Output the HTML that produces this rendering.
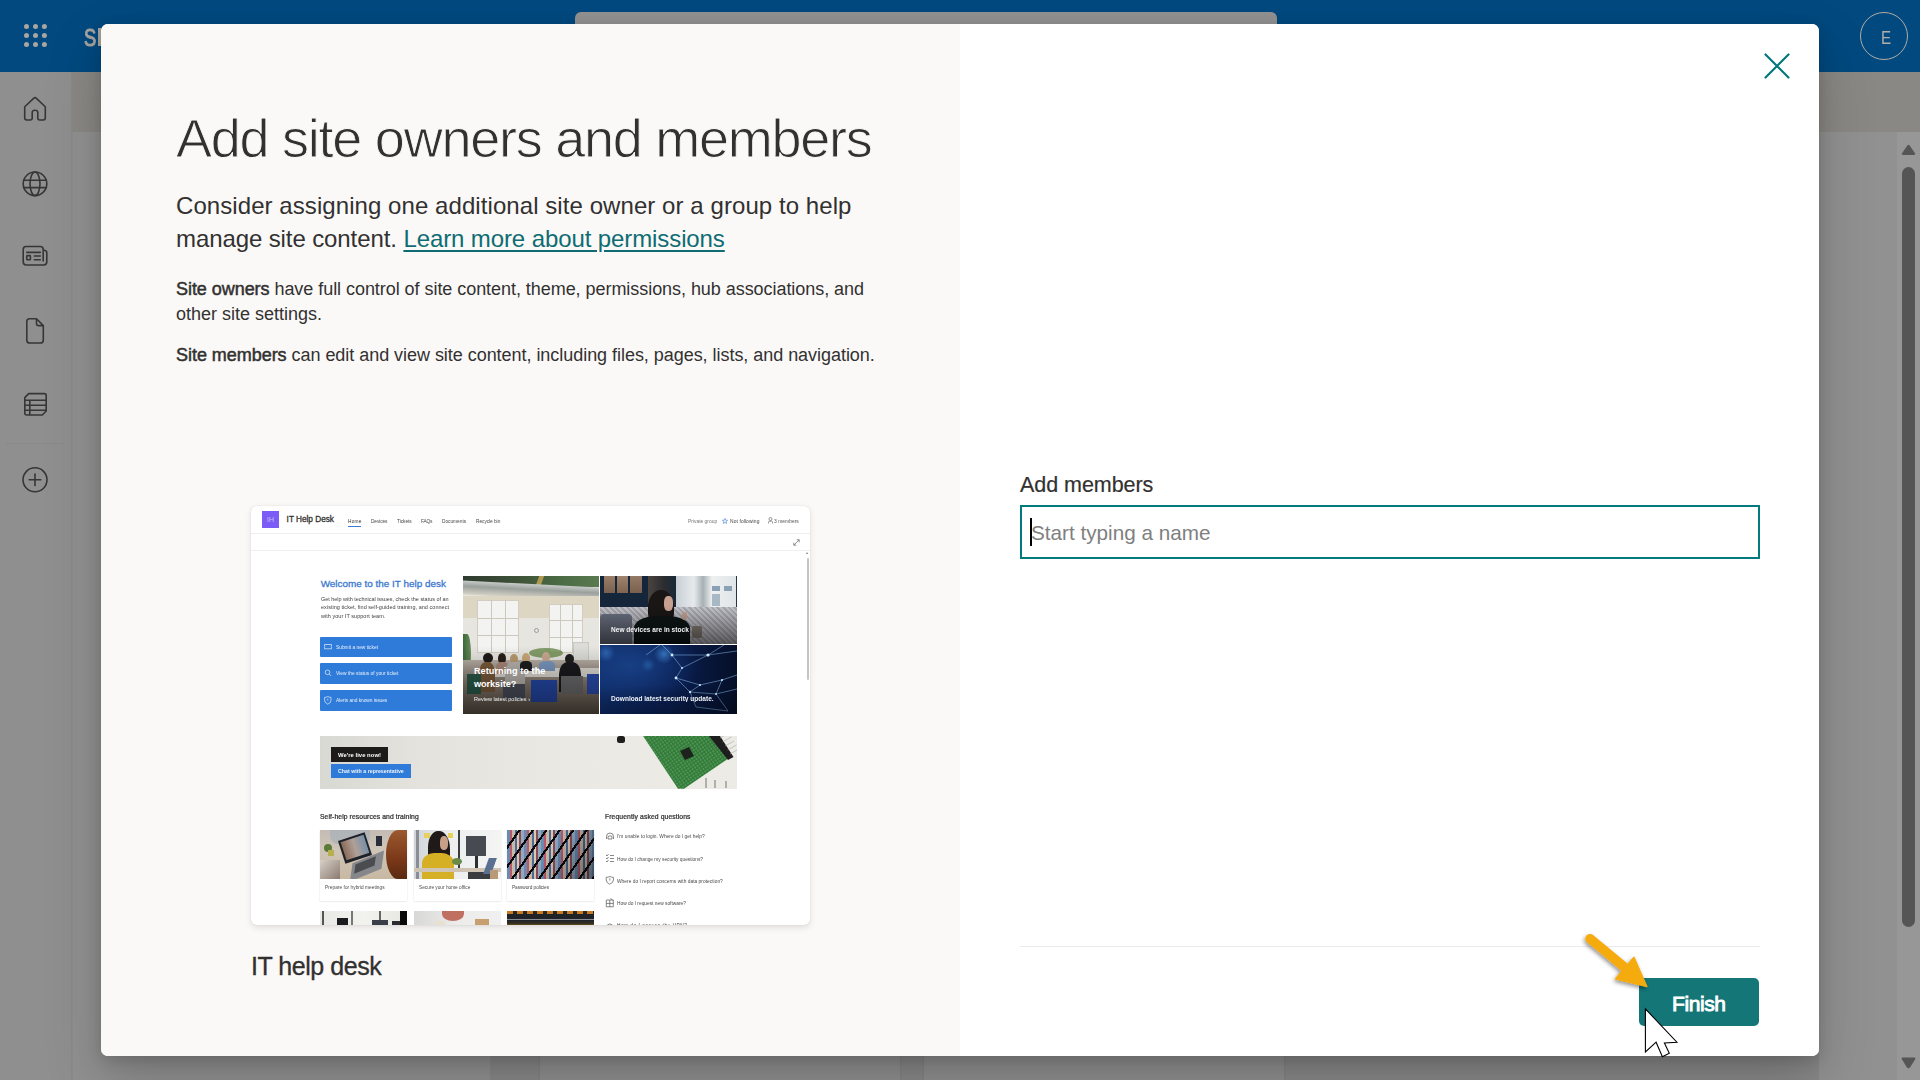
<!DOCTYPE html>
<html><head><meta charset="utf-8">
<style>
*{margin:0;padding:0;box-sizing:border-box}
html,body{width:1920px;height:1080px;overflow:hidden;font-family:"Liberation Sans",sans-serif;background:#8c8c8c;position:relative}
.abs{position:absolute}
#topbar{left:0;top:0;width:1920px;height:72px;background:#01497f}
#rail{left:0;top:72px;width:72px;height:1008px;background:#8f8f8f;border-right:1px solid #8a8a8a}
#hdr{left:72px;top:72px;width:1848px;height:60px;background:#8a8885}
#page{left:73px;top:132px;width:1847px;height:948px;background:#919191}
#sbar{left:1897px;top:132px;width:23px;height:948px;background:#979797}
#modal{left:101px;top:24px;width:1718px;height:1032px;border-radius:7px;overflow:hidden;background:#fff;box-shadow:0 25.6px 57.6px 0 rgba(0,0,0,.19),0 4.8px 14.4px 0 rgba(0,0,0,.15)}
#lp{left:0;top:0;width:859px;height:1032px;background:#faf9f8}
#rp{left:859px;top:0;width:859px;height:1032px;background:#fff}
.t{position:absolute;white-space:nowrap}
.sb{-webkit-text-stroke:0.5px currentColor}
.a{position:absolute}
.txt{color:#323130;white-space:nowrap}
</style></head><body>
<div id="topbar" class="abs">
  <svg class="abs" style="left:0;top:0" width="100" height="72" viewBox="0 0 100 72" fill="#aaa59f">
    <circle cx="26.5" cy="26.4" r="2.5"/><circle cx="35.5" cy="26.4" r="2.5"/><circle cx="44.4" cy="26.4" r="2.5"/>
    <circle cx="26.5" cy="35.4" r="2.5"/><circle cx="35.5" cy="35.4" r="2.5"/><circle cx="44.4" cy="35.4" r="2.5"/>
    <circle cx="26.5" cy="44.4" r="2.5"/><circle cx="35.5" cy="44.4" r="2.5"/><circle cx="44.4" cy="44.4" r="2.5"/>
  </svg>
  <div class="t" style="left:84.3px;top:26.8px;font-size:23.5px;line-height:23.5px;color:#a9a49e;-webkit-text-stroke:1px #a9a49e;transform:scaleX(0.78);transform-origin:0 0">S</div>
  <div class="abs" style="left:98px;top:27.5px;width:2.6px;height:18.5px;background:#a9a49e"></div>
  <div class="abs" style="left:575px;top:12px;width:702px;height:40px;border-radius:6px;background:#929292"></div>
  <div class="abs" style="left:1860px;top:12px;width:48px;height:48px;border-radius:50%;border:1.2px solid #b0aca6"></div>
  <div class="t" style="left:1880.5px;top:28px;font-size:19px;line-height:19px;color:#b3aea8;transform:scaleX(0.8);transform-origin:0 0">E</div>
</div>
<div id="rail" class="abs"></div>
<svg class="abs" style="left:0;top:72px" width="72" height="440" viewBox="0 72 72 440" fill="none" stroke="#363636" stroke-width="1.6" stroke-linejoin="round" stroke-linecap="round">
  <!-- home -->
  <path d="M25 106.5 L33.6 98.3 Q35 97 36.4 98.3 L45 106.5 Q45.3 106.9 45.3 107.5 L45.3 117.8 Q45.3 120 43.3 120 L39.8 120 Q37.8 120 37.8 118 L37.8 112.5 Q37.8 110.3 35 110.3 Q32.2 110.3 32.2 112.5 L32.2 118 Q32.2 120 30.2 120 L26.7 120 Q24.7 120 24.7 117.8 L24.7 107.5 Q24.7 106.9 25 106.5 Z"/>
  <!-- globe -->
  <circle cx="35" cy="183.8" r="11.8"/>
  <ellipse cx="35" cy="183.8" rx="5" ry="11.8"/>
  <path d="M23.6 180.2 H46.4 M23.6 187.6 H46.4"/>
  <!-- news -->
  <path d="M26 246.5 H40.3 Q43.2 246.5 43.2 249.4 V250.2 H44 Q46.8 250.2 46.8 253 V261.8 Q46.8 265 43.6 265 H26.4 Q23.2 265 23.2 261.8 V249.7 Q23.2 246.5 26 246.5 Z M43.2 250.2 V261"/>
  <path d="M26.8 252.4 H40.3 M34.3 256 H40.3 M34.3 259.8 H40.3"/>
  <rect x="26.8" y="255.6" width="3.6" height="4.2" rx="0.6"/>
  <!-- file -->
  <path d="M29.4 318.7 H36.5 L43.3 325.6 V339.9 Q43.3 343 40.2 343 H29.9 Q26.8 343 26.8 339.9 V321.5 Q26.8 318.7 29.4 318.7 Z M36.5 318.7 V324 Q36.5 325.6 38.1 325.6 H43.3"/>
  <!-- list -->
  <path d="M28.7 393.6 H44.2 Q46.2 393.6 46.2 395.6 V411 L42.3 415 H26.8 Q24.8 415 24.8 413 V397.6 Z M24.8 400.3 H46.2 M24.8 405.3 H46.2 M24.8 410.2 H46.2 M29.8 400.3 V415"/>
  <!-- plus circle -->
  <circle cx="35" cy="479.8" r="12"/>
  <path d="M35 474 V485.6 M29.2 479.8 H40.8"/>
</svg>
<div class="abs" style="left:6px;top:442.5px;width:58px;height:1px;background:#888888"></div>
<div id="hdr" class="abs"></div>
<div id="page" class="abs"></div>
<div id="sbar" class="abs"></div>
<div class="abs" style="left:490px;top:1050px;width:1329px;height:30px;background:#888888"></div>
<div class="abs" style="left:540px;top:1040px;width:360px;height:60px;border-radius:4px;background:#8f8f8f;box-shadow:0 0 1.5px rgba(0,0,0,0.2)"></div>
<div class="abs" style="left:924px;top:1040px;width:360px;height:60px;border-radius:4px;background:#8f8f8f;box-shadow:0 0 1.5px rgba(0,0,0,0.2)"></div>
<svg class="abs" style="left:1896px;top:140px" width="24" height="940" viewBox="0 140 24 940">
  <path d="M11.5 145.3 Q12.5 144 13.5 145.3 L19 153.3 Q19.6 155 17.8 155 H7.2 Q5.4 155 6 153.3 Z" fill="#555"/>
  <rect x="6" y="167" width="13" height="760" rx="6.5" fill="#555"/>
  <path d="M7.5 1057.5 H18.5 Q20 1057.5 19.3 1059 L14.2 1067.3 Q12.5 1069 10.8 1067.3 L5.7 1059 Q5 1057.5 6.5 1057.5 Z" fill="#555"/>
</svg>

<div id="modal" class="abs">
  <div id="lp" class="abs"></div>
  <div id="rp" class="abs"></div>
</div>

<!-- LEFT TEXT -->
<div class="t" style="left:176px;top:111px;font-size:54px;line-height:54px;letter-spacing:-1.25px;color:#323130;-webkit-text-stroke:0.9px #faf9f8">Add site owners and members</div>
<div class="t" style="left:176px;top:194.3px;font-size:24px;line-height:24px;letter-spacing:0.07px;color:#323130">Consider assigning one additional site owner or a group to help</div>
<div class="t" style="left:176px;top:226.6px;font-size:24px;line-height:24px;letter-spacing:-0.1px;color:#323130">manage site content. <span style="color:#0f6c73;text-decoration:underline;text-underline-offset:3px;text-decoration-thickness:2px">Learn more about permissions</span></div>
<div class="t" style="left:176px;top:280.4px;font-size:18px;line-height:18px;letter-spacing:-0.05px;color:#323130"><span class="sb">Site owners</span> have full control of site content, theme, permissions, hub associations, and</div>
<div class="t" style="left:176px;top:304.8px;font-size:18px;line-height:18px;color:#323130">other site settings.</div>
<div class="t" style="left:176px;top:346px;font-size:18px;line-height:18px;letter-spacing:-0.04px;color:#323130"><span class="sb">Site members</span> can edit and view site content, including files, pages, lists, and navigation.</div>
<div class="t" style="left:251px;top:953.8px;font-size:25px;line-height:25px;letter-spacing:-0.45px;color:#323130;-webkit-text-stroke:0.35px #323130">IT help desk</div>

<!--PREVIEW-->
<div id="pv" class="abs" style="left:251px;top:506px;width:559px;height:419px;border-radius:6px;overflow:hidden;background:#fff;box-shadow:0 0 1.2px rgba(0,0,0,0.14),0 2.5px 6px rgba(0,0,0,0.1)">
<div class="a" style="left:11.00px;top:5.20px;width:17.00px;height:16.50px;background:#7b5cf6"></div>
<div class="t" style="left:15.50px;top:9.87px;font-size:70.000px;line-height:70.000px;letter-spacing:0.000px;font-weight:400;color:#c9bdfb;transform:scale(0.1);transform-origin:0 0;">IH</div>
<div class="t" style="left:35.60px;top:10.33px;font-size:8.227px;line-height:8.227px;letter-spacing:0.000px;font-weight:400;color:#323130;-webkit-text-stroke:0.300px currentColor;">IT Help Desk</div>
<div class="t" style="left:96.80px;top:13.24px;font-size:48.000px;line-height:48.000px;letter-spacing:1.987px;font-weight:400;color:#333;transform:scale(0.1);transform-origin:0 0;">Home</div>
<div class="a" style="left:97.00px;top:19.80px;width:13.20px;height:1.00px;background:#3b7ad6"></div>
<div class="t" style="left:119.70px;top:13.24px;font-size:48.000px;line-height:48.000px;letter-spacing:-0.954px;font-weight:400;color:#4a4948;transform:scale(0.1);transform-origin:0 0;">Devices</div>
<div class="t" style="left:146.00px;top:13.24px;font-size:48.000px;line-height:48.000px;letter-spacing:-0.540px;font-weight:400;color:#4a4948;transform:scale(0.1);transform-origin:0 0;">Tickets</div>
<div class="t" style="left:169.70px;top:13.24px;font-size:48.000px;line-height:48.000px;letter-spacing:-2.010px;font-weight:400;color:#4a4948;transform:scale(0.1);transform-origin:0 0;">FAQs</div>
<div class="t" style="left:190.90px;top:13.24px;font-size:48.000px;line-height:48.000px;letter-spacing:-0.221px;font-weight:400;color:#4a4948;transform:scale(0.1);transform-origin:0 0;">Documents</div>
<div class="t" style="left:224.70px;top:13.24px;font-size:48.000px;line-height:48.000px;letter-spacing:-0.512px;font-weight:400;color:#4a4948;transform:scale(0.1);transform-origin:0 0;">Recycle bin</div>
<div class="t" style="left:436.80px;top:13.11px;font-size:49.500px;line-height:49.500px;letter-spacing:-0.201px;font-weight:400;color:#777;transform:scale(0.1);transform-origin:0 0;">Private group</div>
<svg class="a" style="left:471px;top:11.5px" width="6" height="6" viewBox="0 0 6 6"><path d="M3 0.5 L3.7 2.2 L5.6 2.3 L4.1 3.5 L4.6 5.4 L3 4.4 L1.4 5.4 L1.9 3.5 L0.4 2.3 L2.3 2.2 Z" fill="none" stroke="#3b7ad6" stroke-width="0.6"/></svg>
<div class="t" style="left:478.70px;top:13.11px;font-size:49.500px;line-height:49.500px;letter-spacing:0.884px;font-weight:400;color:#444;transform:scale(0.1);transform-origin:0 0;">Not following</div>
<svg class="a" style="left:516.8px;top:11px" width="5" height="7" viewBox="0 0 5 7"><circle cx="2.5" cy="2" r="1.5" fill="none" stroke="#555" stroke-width="0.6"/><path d="M0.5 6.5 V5.2 Q0.5 4.2 1.5 4.2 H3.5 Q4.5 4.2 4.5 5.2 V6.5" fill="none" stroke="#555" stroke-width="0.6"/></svg>
<div class="t" style="left:523.20px;top:13.11px;font-size:49.500px;line-height:49.500px;letter-spacing:0.053px;font-weight:400;color:#555;transform:scale(0.1);transform-origin:0 0;">3 members</div>
<div class="a" style="left:0.00px;top:27.00px;width:559.00px;height:1.00px;background:#eeeeee"></div>
<svg class="a" style="left:541.5px;top:33px" width="7" height="7" viewBox="0 0 7 7"><path d="M0.8 6.2 L6.2 0.8 M3.6 0.8 H6.2 V3.4 M0.8 3.6 V6.2 H3.4" fill="none" stroke="#666" stroke-width="0.7"/></svg>
<div class="a" style="left:0.00px;top:44.00px;width:559.00px;height:1.00px;background:#f0f0f0"></div>
<div class="a" style="left:555.50px;top:52.00px;width:2.00px;height:122.00px;background:#c4c4c4;border-radius:1px"></div>
<div class="a" style="left:555px;top:46px;width:0;height:0;border-left:1.5px solid transparent;border-right:1.5px solid transparent;border-bottom:2px solid #777"></div>
<div class="t" style="left:69.70px;top:72.50px;font-size:9.916px;line-height:9.916px;letter-spacing:0.000px;font-weight:400;color:#3b78d0;-webkit-text-stroke:0.300px currentColor;">Welcome to the IT help desk</div>
<div class="t" style="left:69.50px;top:89.64px;font-size:55.000px;line-height:55.000px;letter-spacing:-0.286px;font-weight:400;color:#403f3e;transform:scale(0.1);transform-origin:0 0;">Get help with technical issues, check the status of an</div>
<div class="t" style="left:69.50px;top:98.44px;font-size:55.000px;line-height:55.000px;letter-spacing:0.377px;font-weight:400;color:#403f3e;transform:scale(0.1);transform-origin:0 0;">existing ticket, find self-guided training, and connect</div>
<div class="t" style="left:69.50px;top:107.34px;font-size:55.000px;line-height:55.000px;letter-spacing:0.328px;font-weight:400;color:#403f3e;transform:scale(0.1);transform-origin:0 0;">with your IT support team.</div>
<div class="a" style="left:69.00px;top:130.60px;width:132.00px;height:20.50px;background:#2f7bd9;border-radius:1px"></div>
<div class="t" style="left:85.00px;top:138.74px;font-size:48.500px;line-height:48.500px;letter-spacing:-0.029px;font-weight:400;color:#e8f0fb;transform:scale(0.1);transform-origin:0 0;">Submit a new ticket</div>
<div class="a" style="left:69.00px;top:157.00px;width:132.00px;height:20.80px;background:#2f7bd9;border-radius:1px"></div>
<div class="t" style="left:85.00px;top:165.29px;font-size:48.500px;line-height:48.500px;letter-spacing:0.261px;font-weight:400;color:#e8f0fb;transform:scale(0.1);transform-origin:0 0;">View the status of your ticket</div>
<div class="a" style="left:69.00px;top:183.90px;width:132.00px;height:20.70px;background:#2f7bd9;border-radius:1px"></div>
<div class="t" style="left:85.00px;top:192.14px;font-size:48.500px;line-height:48.500px;letter-spacing:-0.454px;font-weight:400;color:#e8f0fb;transform:scale(0.1);transform-origin:0 0;">Alerts and known issues</div>
<svg class="a" style="left:72px;top:136px" width="10" height="70" viewBox="0 0 10 70" fill="none" stroke="#e8f0fb" stroke-width="0.7"><path d="M1.5 2.5 H8.5 V4 Q7.8 4.6 8.5 5.2 V6.8 H1.5 V5.2 Q2.2 4.6 1.5 4 Z"/><circle cx="4.5" cy="30.3" r="2.3"/><path d="M6.2 32 L8.2 34"/><path d="M4.8 54.6 Q3 55.4 1.6 55.4 V58.2 Q1.6 60.8 4.8 62.2 Q8 60.8 8 58.2 V55.4 Q6.6 55.4 4.8 54.6 Z M4.8 56.6 V58.6"/></svg>
<div class="a" style="left:211.89999999999998px;top:69.89999999999998px;width:135.9px;height:137.9px;overflow:hidden;background:#e7e5df">
<div class="a" style="left:0;top:0;width:136px;height:11px;background:linear-gradient(to right,#2e3a2e,#3e5238 40%,#4a6a44 70%,#5a7a50)"></div>
<div class="a" style="left:74px;top:0;width:5px;height:12px;background:#b09a50;transform:skewX(-20deg)"></div>
<div class="a" style="left:0;top:8px;width:136px;height:14px;background:linear-gradient(to bottom,#c8ccc8,#9aa09c 40%,#d8d4c8);transform:skewY(3deg)"></div>
<div class="a" style="left:0;top:20px;width:136px;height:22px;background:#ddd6c2"></div>
<div class="a" style="left:0;top:42px;width:136px;height:40px;background:#e6e5e0"></div>
<div class="a" style="left:14px;top:24px;width:42px;height:53px;background:#f3f3f1;border:1.5px solid #d2cdc0"></div><div class="a" style="left:28.0px;top:24px;width:1.2px;height:53px;background:#cdc8bc"></div><div class="a" style="left:42.0px;top:24px;width:1.2px;height:53px;background:#cdc8bc"></div><div class="a" style="left:14px;top:41.7px;width:42px;height:1.2px;background:#cdc8bc"></div><div class="a" style="left:14px;top:59.3px;width:42px;height:1.2px;background:#cdc8bc"></div>
<div class="a" style="left:86px;top:28px;width:34px;height:49px;background:#f3f3f1;border:1.5px solid #d2cdc0"></div><div class="a" style="left:97.3px;top:28px;width:1.2px;height:49px;background:#cdc8bc"></div><div class="a" style="left:108.7px;top:28px;width:1.2px;height:49px;background:#cdc8bc"></div><div class="a" style="left:86px;top:44.3px;width:34px;height:1.2px;background:#cdc8bc"></div><div class="a" style="left:86px;top:60.7px;width:34px;height:1.2px;background:#cdc8bc"></div>
<div class="a" style="left:71px;top:52px;width:5px;height:5px;border-radius:50%;border:0.8px solid #999"></div>
<div class="a" style="left:110px;top:66px;width:16px;height:22px;background:#dcdcd8;border:0.8px solid #c8c8c4"></div>
<div class="a" style="left:0;top:58px;width:8px;height:40px;background:linear-gradient(to right,#3a6a3a,#6a8a5a);border-radius:0 50% 50% 0"></div>
<div class="a" style="left:66px;top:72px;width:34px;height:10px;border-radius:50%;background:#6a8a4a;opacity:0.8"></div>
<div class="a" style="left:0;top:84px;width:136px;height:54px;background:linear-gradient(to bottom,#b8b0a6,#8a7e72 40%,#5a5046)"></div>
<div class="a" style="left:24px;top:92px;width:112px;height:9px;background:#e0dcd4"></div>
<div class="a" style="left:20px;top:77px;width:10px;height:10px;border-radius:50%;background:#1e1a18"></div>
<div class="a" style="left:16px;top:86px;width:16px;height:30px;border-radius:40% 40% 0 0;background:#7a5a3a"></div>
<div class="a" style="left:35px;top:77px;width:8px;height:11px;border-radius:50%;background:#2a1e18"></div>
<div class="a" style="left:33px;top:86px;width:13px;height:12px;border-radius:40% 40% 0 0;background:#a88878"></div>
<div class="a" style="left:47px;top:78px;width:8px;height:10px;border-radius:50%;background:#b89a70"></div>
<div class="a" style="left:42px;top:86px;width:20px;height:26px;border-radius:40% 40% 0 0;background:#b8b4ae"></div>
<div class="a" style="left:59px;top:77px;width:8px;height:10px;border-radius:50%;background:#c8a878"></div>
<div class="a" style="left:57px;top:85px;width:12px;height:10px;border-radius:40% 40% 0 0;background:#1e1e20"></div>
<div class="a" style="left:79px;top:76px;width:8px;height:10px;border-radius:50%;background:#c8a890"></div>
<div class="a" style="left:76px;top:85px;width:16px;height:10px;border-radius:40% 40% 0 0;background:#7a98c0"></div>
<div class="a" style="left:102px;top:78px;width:9px;height:10px;border-radius:50%;background:#1e1e1e"></div>
<div class="a" style="left:96px;top:86px;width:22px;height:30px;border-radius:40% 40% 0 0;background:#1a1a1e"></div>
<div class="a" style="left:68px;top:104px;width:26px;height:22px;background:#2548a8"></div>
<div class="a" style="left:124px;top:98px;width:14px;height:20px;background:#2a4cae"></div>
<div class="a" style="left:98px;top:100px;width:22px;height:18px;background:#6a6a6c"></div>
<div class="a" style="left:4px;top:98px;width:14px;height:20px;background:#2a5a4a"></div>
<div class="a" style="left:40px;top:108px;width:22px;height:16px;background:#4a4e5a"></div>
<div class="a" style="left:0;top:70px;width:136px;height:68px;background:linear-gradient(to bottom,rgba(0,0,0,0) 0%,rgba(0,0,0,0.18) 40%,rgba(0,0,0,0.42) 100%)"></div>
</div>
<div class="a" style="left:349.29999999999995px;top:69.89999999999998px;width:136.4px;height:68px;overflow:hidden;background:#2a3440">
<div class="a" style="left:0;top:0;width:48px;height:32px;background:#15263a"></div>
<div class="a" style="left:4px;top:0;width:11px;height:17px;background:linear-gradient(#9a7e68,#7a6050)"></div>
<div class="a" style="left:17px;top:0;width:11px;height:17px;background:linear-gradient(#a08470,#806450)"></div>
<div class="a" style="left:30px;top:0;width:12px;height:17px;background:linear-gradient(#947a66,#7a604e)"></div>
<div class="a" style="left:48px;top:0;width:28px;height:32px;background:linear-gradient(to right,#4a4440,#2a2c30 60%,#1a2a38)"></div>
<div class="a" style="left:76px;top:0;width:60px;height:32px;background:linear-gradient(to right,#c8d0d6,#e6eaec 30%,#a8b0b4 45%,#eef0f0 60%,#dfe5e8)"></div>
<div class="a" style="left:112px;top:10px;width:8px;height:5px;background:#8aa0b4"></div>
<div class="a" style="left:124px;top:10px;width:8px;height:5px;background:#8aa0b4"></div>
<div class="a" style="left:112px;top:18px;width:8px;height:12px;background:#a8b8c4"></div>
<div class="a" style="left:0;top:31px;width:137px;height:37px;background:repeating-linear-gradient(45deg,#a8a8b0 0,#a8a8b0 2px,#c4c4ca 2px,#c4c4ca 4px)"></div>
<div class="a" style="left:0;top:38px;width:32px;height:30px;border-radius:4px 4px 0 0;background:#6a7080"></div>
<div class="a" style="left:48px;top:14px;width:26px;height:34px;border-radius:50% 50% 30% 30%;background:#1a1616"></div>
<div class="a" style="left:64px;top:20px;width:9px;height:15px;border-radius:40%;background:#c8a090"></div>
<div class="a" style="left:34px;top:40px;width:56px;height:30px;border-radius:40% 40% 0 0;background:#0e1616"></div>
<div class="a" style="left:82px;top:36px;width:5px;height:8px;background:#c8a090;border-radius:40%"></div>
<div class="a" style="left:92px;top:50px;width:10px;height:12px;background:#8a8078;border-radius:2px"></div>
<div class="a" style="left:0;top:30px;width:137px;height:38px;background:linear-gradient(to bottom,rgba(0,0,0,0),rgba(0,0,0,0.55))"></div>
</div>
<div class="a" style="left:349.29999999999995px;top:139px;width:136.4px;height:68.8px;overflow:hidden;
background:radial-gradient(circle 9px at 6px 8px,#2c62ac,rgba(20,60,140,0)),radial-gradient(circle 7px at 48px 20px,#24569c,rgba(20,60,140,0)),radial-gradient(circle 10px at 64px 9px,#3470b8,rgba(20,60,140,0)),radial-gradient(ellipse 70px 40px at 30px 20px,#183f84,rgba(10,30,80,0) 100%),linear-gradient(to right,#0f2d6a,#0a1f52 50%,#050f28)">
<svg class="a" style="left:0;top:0" width="137" height="69" viewBox="0 0 137 69"><g stroke="#8cc0f0" stroke-width="0.6" fill="none" opacity="0.85">
<path d="M62 0 L72 10 L108 10 L137 6 M72 10 L82 23 L108 10 M82 23 L76 33 L100 40 L122 35 L137 30 M76 33 L90 47 L116 49 L137 44 M100 40 L90 47 M116 49 L122 35 M90 47 L96 62 L128 66 M116 49 L128 66 M60 0 L46 10 M108 10 L124 0"/></g>
<g fill="#d0ecff"><circle cx="72" cy="10" r="1.4"/><circle cx="108" cy="10" r="1.6"/><circle cx="82" cy="23" r="1"/><circle cx="76" cy="33" r="1.4"/><circle cx="100" cy="40" r="1"/><circle cx="90" cy="47" r="1.2"/><circle cx="122" cy="35" r="1"/><circle cx="116" cy="49" r="1"/></g></svg>
<div class="a" style="left:0;top:40px;width:137px;height:29px;background:linear-gradient(to bottom,rgba(0,0,0,0),rgba(0,0,0,0.3))"></div>
</div>
<div class="t" style="left:222.90px;top:160.71px;font-size:9.200px;line-height:9.200px;letter-spacing:0.038px;font-weight:700;color:#fff;">Returning to the</div>
<div class="t" style="left:222.90px;top:173.61px;font-size:9.200px;line-height:9.200px;letter-spacing:-0.056px;font-weight:700;color:#fff;">worksite?</div>
<div class="t" style="left:223.00px;top:190.34px;font-size:55.061px;line-height:55.061px;letter-spacing:0.000px;font-weight:400;color:#f2f2f2;transform:scale(0.1);transform-origin:0 0;">Review latest policies ›</div>
<div class="t" style="left:359.60px;top:119.94px;font-size:65.700px;line-height:65.700px;letter-spacing:0.007px;font-weight:700;color:#f4f4f4;transform:scale(0.1);transform-origin:0 0;">New devices are in stock</div>
<div class="t" style="left:359.60px;top:189.44px;font-size:65.700px;line-height:65.700px;letter-spacing:0.037px;font-weight:700;color:#eef2f8;transform:scale(0.1);transform-origin:0 0;">Download latest security update.</div>
<div class="a" style="left:68.89999999999998px;top:230px;width:416.8px;height:52.7px;overflow:hidden;background:linear-gradient(to right,#d9d9d4,#e4e3de 25%,#eae9e4 60%,#ecebe6)">
<svg class="a" style="left:0;top:0" width="417" height="53" viewBox="0 0 417 53">
<defs><pattern id="pcbdots" width="3" height="3" patternUnits="userSpaceOnUse" patternTransform="rotate(-35)"><rect width="3" height="3" fill="#2f7a36"/><rect x="0.5" y="0.5" width="1.4" height="0.9" fill="#d8ecd0" opacity="0.6"/></pattern></defs>
<polygon points="323,0 399.7,0 407.4,23.2 364,52.7 358,52.7" fill="url(#pcbdots)"/>
<polygon points="360,15 369,11 374,20 365,24" fill="#1c221c"/>
<polygon points="389,0 400,0 413.5,21 408,24" fill="#1e1e1e"/>
<path d="M400 2 L409 -3 M402.5 6 L411.5 1 M405 10 L414 5 M407.5 14 L416.5 9 M410 18 L417 14" stroke="#aaa" stroke-width="0.6"/>
<rect x="297" y="0" width="8" height="7" rx="2.5" fill="#1e1e1e"/>
<path d="M386 42 V52 M395 44 V52 M406 45 V52" stroke="#555" stroke-width="0.8"/>
</svg></div>
<div class="a" style="left:80.00px;top:241.20px;width:57.00px;height:14.50px;background:#1c1b1a"></div>
<div class="t" style="left:87.00px;top:246.26px;font-size:59.546px;line-height:59.546px;letter-spacing:0.000px;font-weight:700;color:#fff;transform:scale(0.1);transform-origin:0 0;">We're live now!</div>
<div class="a" style="left:80.00px;top:258.00px;width:80.30px;height:13.70px;background:#2f7bd9"></div>
<div class="t" style="left:87.20px;top:263.32px;font-size:52.859px;line-height:52.859px;letter-spacing:0.000px;font-weight:700;color:#eef4fc;transform:scale(0.1);transform-origin:0 0;">Chat with a representative</div>
<div class="t" style="left:69.30px;top:306.64px;font-size:68.000px;line-height:68.000px;letter-spacing:0.868px;font-weight:400;color:#323130;transform:scale(0.1);transform-origin:0 0;-webkit-text-stroke:2.500px currentColor;">Self-help resources and training</div>
<div class="t" style="left:354.20px;top:306.94px;font-size:68.000px;line-height:68.000px;letter-spacing:0.936px;font-weight:400;color:#323130;transform:scale(0.1);transform-origin:0 0;-webkit-text-stroke:2.500px currentColor;">Frequently asked questions</div>
<div class="a" style="left:69.10px;top:324.20px;width:87.30px;height:71.00px;background:#fff;box-shadow:0 0.5px 1.5px rgba(0,0,0,0.18)"></div>
<div class="t" style="left:73.70px;top:379.08px;font-size:47.500px;line-height:47.500px;letter-spacing:0.380px;font-weight:400;color:#4a4948;transform:scale(0.1);transform-origin:0 0;">Prepare for hybrid meetings</div>
<div class="a" style="left:162.90px;top:324.20px;width:87.20px;height:71.00px;background:#fff;box-shadow:0 0.5px 1.5px rgba(0,0,0,0.18)"></div>
<div class="t" style="left:167.50px;top:379.08px;font-size:47.500px;line-height:47.500px;letter-spacing:-0.045px;font-weight:400;color:#4a4948;transform:scale(0.1);transform-origin:0 0;">Secure your home office</div>
<div class="a" style="left:256.40px;top:324.20px;width:86.90px;height:71.00px;background:#fff;box-shadow:0 0.5px 1.5px rgba(0,0,0,0.18)"></div>
<div class="t" style="left:261.00px;top:379.08px;font-size:47.500px;line-height:47.500px;letter-spacing:-0.635px;font-weight:400;color:#4a4948;transform:scale(0.1);transform-origin:0 0;">Password policies</div>
<div class="a" style="left:69.10000000000002px;top:324.20000000000005px;width:87.3px;height:48.7px;overflow:hidden;background:linear-gradient(to bottom,#c4bcb4,#cfc5b8 40%,#c8b8a2)">
<div class="a" style="left:10px;top:0;width:40px;height:14px;background:#a8b0b8;border-radius:0 0 8px 8px;opacity:0.7"></div>
<div class="a" style="left:4px;top:14px;width:8px;height:8px;border-radius:50%;background:#5a7a3a"></div>
<div class="a" style="left:8px;top:20px;width:6px;height:6px;background:#b8b050"></div>
<div class="a" style="left:21px;top:6px;width:28px;height:24px;background:#1e2228;transform:rotate(-18deg)"></div>
<div class="a" style="left:23px;top:8px;width:24px;height:19px;background:linear-gradient(to right,#8a6a58,#b0a098 50%,#7890a8);transform:rotate(-18deg)"></div>
<div class="a" style="left:30px;top:28px;width:34px;height:16px;background:#85878a;transform:rotate(-22deg) skewX(-30deg)"></div>
<div class="a" style="left:34px;top:31px;width:22px;height:8px;background:#4a4c50;transform:rotate(-22deg) skewX(-30deg)"></div>
<div class="a" style="left:56px;top:6px;width:6px;height:10px;background:#2a2e3a"></div>
<div class="a" style="left:66px;top:0;width:24px;height:49px;border-radius:50% 0 0 50%;background:linear-gradient(to bottom,#9c5a30,#7a3818 60%,#5a2a10)"></div>
<div class="a" style="left:0;top:30px;width:20px;height:19px;background:linear-gradient(135deg,#d8d0c8,#8a7a70)"></div>
</div>
<div class="a" style="left:162.89999999999998px;top:324.20000000000005px;width:87.2px;height:48.7px;overflow:hidden;background:linear-gradient(to right,#d0d4d8,#eceeef 40%,#f4f4f3)">
<div class="a" style="left:2px;top:0;width:3px;height:49px;background:#8a8e94"></div>
<div class="a" style="left:44px;top:0;width:2px;height:40px;background:#3a3c40"></div>
<div class="a" style="left:10px;top:3px;width:6px;height:5px;background:#e8d060"></div>
<div class="a" style="left:34px;top:3px;width:5px;height:5px;background:#e8d060"></div>
<div class="a" style="left:14px;top:1px;width:22px;height:36px;border-radius:45% 50% 10% 20%;background:#1f1a18"></div>
<div class="a" style="left:26px;top:6px;width:8px;height:14px;border-radius:40%;background:#c8a088"></div>
<div class="a" style="left:8px;top:23px;width:32px;height:26px;border-radius:40% 40% 0 0;background:#d6b024"></div>
<div class="a" style="left:38px;top:28px;width:10px;height:7px;background:#6a8a4a;border-radius:50%"></div>
<div class="a" style="left:52px;top:6px;width:20px;height:20px;background:#474a50"></div>
<div class="a" style="left:61px;top:26px;width:3px;height:12px;background:#2c2e32"></div>
<div class="a" style="left:0;top:38px;width:87px;height:4px;background:#cfc4b4"></div>
<div class="a" style="left:54px;top:42px;width:22px;height:7px;background:#3a3c40"></div>
<div class="a" style="left:72px;top:28px;width:8px;height:16px;background:#5a7090;transform:skewX(-20deg)"></div>
<div class="a" style="left:76px;top:40px;width:8px;height:9px;background:#b89a78"></div>
</div>
<div class="a" style="left:256.4px;top:324.20000000000005px;width:86.9px;height:48.7px;overflow:hidden;background:repeating-linear-gradient(90deg,#6a8ab0 0px,#6a8ab0 3px,#b85868 3px,#b85868 5px,#c8b8a8 5px,#c8b8a8 8px,#4a6a98 8px,#4a6a98 10px,#d8c8b0 10px,#d8c8b0 12px,#8a4a58 12px,#8a4a58 14px,#90a8c0 14px,#90a8c0 17px)">
<div class="a" style="left:0;top:0;width:87px;height:49px;background:repeating-linear-gradient(-55deg,rgba(10,10,10,1) 0px,rgba(10,10,10,1) 2.2px,rgba(0,0,0,0) 2.2px,rgba(0,0,0,0) 11px)"></div>
<div class="a" style="left:0;top:0;width:87px;height:49px;background:linear-gradient(120deg,rgba(0,0,0,0) 45%,rgba(0,0,0,0.45) 100%)"></div>
</div>
<div class="a" style="left:69.10000000000002px;top:404.70000000000005px;width:87.3px;height:16px;overflow:hidden;background:linear-gradient(to right,#e8e8e4,#f2f2ee 50%,#e8e8e2)">
<div class="a" style="left:2px;top:0;width:1.5px;height:16px;background:#555"></div>
<div class="a" style="left:31px;top:0;width:1.5px;height:16px;background:#777"></div>
<div class="a" style="left:59px;top:0;width:1.5px;height:16px;background:#666"></div>
<div class="a" style="left:17px;top:7px;width:11px;height:9px;background:#1a1c20"></div>
<div class="a" style="left:52px;top:9px;width:16px;height:7px;background:#3a3e48"></div>
<div class="a" style="left:80px;top:0;width:8px;height:16px;background:#0a0a0a"></div>
<div class="a" style="left:72px;top:10px;width:8px;height:6px;background:#2a2c30"></div>
</div>
<div class="a" style="left:162.89999999999998px;top:404.70000000000005px;width:87.2px;height:16px;overflow:hidden;background:linear-gradient(to right,#d8d8d8,#ececea 50%,#f0f0f0)">
<div class="a" style="left:28px;top:-4px;width:22px;height:14px;border-radius:0 0 50% 50%;background:#c07060"></div>
<div class="a" style="left:21px;top:10px;width:10px;height:6px;background:#e8e0d0"></div>
<div class="a" style="left:61px;top:8px;width:14px;height:8px;background:#c8a070"></div>
</div>
<div class="a" style="left:256.4px;top:404.70000000000005px;width:86.9px;height:16px;overflow:hidden;background:linear-gradient(to bottom,#1e2024,#202428 60%,#3a3020 80%,#c89a20)">
<div class="a" style="left:0;top:0;width:87px;height:3px;background:repeating-linear-gradient(90deg,#c87a20 0,#c87a20 6px,#2a2620 6px,#2a2620 10px)"></div>
<div class="a" style="left:0;top:8px;width:87px;height:1.2px;background:#8a8e94"></div>
</div>
<div class="t" style="left:366.00px;top:328.39px;font-size:48.500px;line-height:48.500px;letter-spacing:0.192px;font-weight:400;color:#4a4948;transform:scale(0.1);transform-origin:0 0;">I'm unable to login. Where do I get help?</div>
<div class="t" style="left:366.00px;top:350.69px;font-size:48.500px;line-height:48.500px;letter-spacing:-0.291px;font-weight:400;color:#4a4948;transform:scale(0.1);transform-origin:0 0;">How do I change my security questions?</div>
<div class="t" style="left:366.00px;top:372.89px;font-size:48.500px;line-height:48.500px;letter-spacing:0.198px;font-weight:400;color:#4a4948;transform:scale(0.1);transform-origin:0 0;">Where do I report concerns with data protection?</div>
<div class="t" style="left:366.00px;top:395.19px;font-size:48.500px;line-height:48.500px;letter-spacing:-0.132px;font-weight:400;color:#4a4948;transform:scale(0.1);transform-origin:0 0;">How do I request new software?</div>
<div class="t" style="left:366.00px;top:417.39px;font-size:48.500px;line-height:48.500px;letter-spacing:5.353px;font-weight:400;color:#4a4948;transform:scale(0.1);transform-origin:0 0;">How do I access the VPN?</div>
<svg class="a" style="left:353.5px;top:325px" width="10" height="100" viewBox="0 0 10 100" fill="none" stroke="#555" stroke-width="0.7">
<path d="M1.5 8 V5.5 Q1.5 2 5 2 Q8.5 2 8.5 5.5 V8 M3 5.5 Q5 4 7 5.5 V8 H3 Z"/>
<path d="M1 24 L2 25 L3.5 23 M1 27 L2 28 L3.5 26 M1 30 L2 31 L3.5 29 M5 24.5 H9 M5 27.5 H9 M5 30.5 H9"/>
<path d="M4.8 45.5 Q3 46.3 1.2 46.3 V49 Q1.2 51.8 4.8 53.2 Q8.4 51.8 8.4 49 V46.3 Q6.6 46.3 4.8 45.5 Z M4.8 47.3 V49.5"/>
<path d="M1.3 69 H8.3 V75.8 H1.3 Z M4.8 69 V75.8 M1.3 72.4 H8.3 M5.5 67.5 L7.5 69"/>
<circle cx="4.8" cy="96" r="3"/>
</svg>
</div>
<!--/PREVIEW-->
<!-- RIGHT -->
<svg class="abs" style="left:1763px;top:52px" width="28" height="28" viewBox="0 0 28 28"><path d="M2.5 2.5 L25.5 25.5 M25.5 2.5 L2.5 25.5" stroke="#03787c" stroke-width="2.2" stroke-linecap="round"/></svg>
<div class="t" style="left:1020px;top:475.2px;font-size:21.5px;line-height:21.5px;letter-spacing:-0.05px;color:#323130;-webkit-text-stroke:0.2px #323130">Add members</div>
<div class="abs" style="left:1020px;top:505px;width:740px;height:54px;border:2.5px solid #037a7e;background:#fff"></div>
<div class="abs" style="left:1030px;top:518px;width:2px;height:28px;background:#000"></div>
<div class="t" style="left:1031px;top:522.5px;font-size:20.7px;line-height:20.7px;color:#808080">Start typing a name</div>
<div class="abs" style="left:1020px;top:946px;width:740px;height:1px;background:#edebe9"></div>
<div class="abs" style="left:1639px;top:978px;width:120px;height:48px;border-radius:5px;background:#147677"></div>
<div class="t" style="left:1672px;top:993.2px;font-size:21px;line-height:21px;letter-spacing:-0.4px;color:#fff;-webkit-text-stroke:0.9px #fff">Finish</div>
<!--OVER-->
<svg class="abs" style="left:1570px;top:920px;overflow:visible" width="200" height="150" viewBox="1570 920 200 150">
  <defs><filter id="sh" x="-30%" y="-30%" width="160%" height="160%"><feGaussianBlur in="SourceAlpha" stdDeviation="2"/><feOffset dx="-1" dy="2"/><feComponentTransfer><feFuncA type="linear" slope="0.45"/></feComponentTransfer><feMerge><feMergeNode/><feMergeNode in="SourceGraphic"/></feMerge></filter></defs>
  <g filter="url(#sh)">
    <path d="M1590 938.7 L1626 968.5" stroke="#f5aa0f" stroke-width="9.5" stroke-linecap="round"/>
    <path d="M1634 956.8 L1647.2 986.8 L1615 979 Z" fill="#f5aa0f" stroke="#f5aa0f" stroke-width="1" stroke-linejoin="round"/>
  </g>
  <path d="M1645.4 1008.9 L1645.4 1051.9 L1656.1 1042.2 L1662.4 1056.8 L1669.3 1053.3 L1664.4 1042.9 L1676.9 1042.2 Z" fill="#fff" stroke="#000" stroke-width="1.1" stroke-linejoin="miter"/>
</svg>
</body></html>
